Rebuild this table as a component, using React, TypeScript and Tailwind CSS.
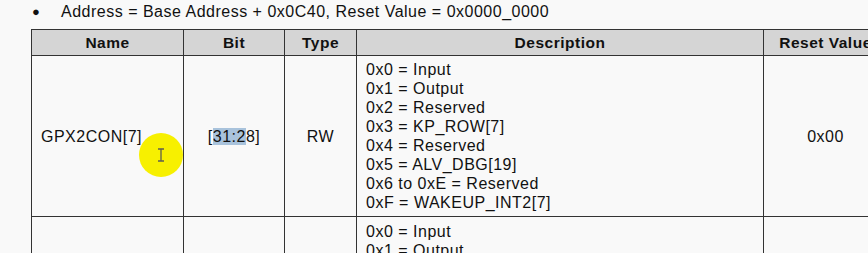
import React from "react";

const DESC = [
  "0x0 = Input",
  "0x1 = Output",
  "0x2 = Reserved",
  "0x3 = KP_ROW[7]",
  "0x4 = Reserved",
  "0x5 = ALV_DBG[19]",
  "0x6 to 0xE = Reserved",
  "0xF = WAKEUP_INT2[7]",
];

const font = { fontFamily: '"Liberation Sans", Arial, sans-serif' };

export default function App() {
  return (
    <div
      className="relative h-[253px] w-[868px] overflow-hidden bg-[#f9f9f9] text-[#111] tracking-[0.5px]"
      style={font}
    >
      <div className="flex h-[23px] items-center pl-[32px] text-[16px]">
        <span className="w-[29px] text-[13px]">●</span>
        <span>Address = Base Address + 0x0C40, Reset Value = 0x0000_0000</span>
      </div>

      <table className="ml-[31px] mt-[6px] w-[856px] table-fixed border-collapse text-[16px] leading-[19px]">
        <colgroup>
          <col className="w-[152px]" />
          <col className="w-[101px]" />
          <col className="w-[72px]" />
          <col className="w-[407px]" />
          <col className="w-[124px]" />
        </colgroup>
        <thead>
          <tr className="h-[26px] bg-[#d5d5d5] text-[15.5px] font-bold">
            <th className="border border-[#333]">Name</th>
            <th className="border border-[#333]">Bit</th>
            <th className="border border-[#333]">Type</th>
            <th className="border border-[#333]">Description</th>
            <th className="border border-[#333]">Reset Value</th>
          </tr>
        </thead>
        <tbody>
          <tr className="h-[161px]">
            <td className="border border-[#333] pl-[9px]">GPX2CON[7]</td>
            <td className="border border-[#333] text-center">
              [<span className="bg-[#a9c3dc]">31:2</span>8]
            </td>
            <td className="border border-[#333] text-center">RW</td>
            <td className="border border-[#333] px-[9px] py-[4px] align-top">
              {DESC.map((d) => (
                <div key={d}>{d}</div>
              ))}
            </td>
            <td className="border border-[#333] text-center">0x00</td>
          </tr>
          <tr className="h-[40px]">
            <td className="border border-[#333]" />
            <td className="border border-[#333]" />
            <td className="border border-[#333]" />
            <td className="border border-[#333] px-[9px] py-[5px] align-top">
              <div>0x0 = Input</div>
              <div>0x1 = Output</div>
            </td>
            <td className="border border-[#333]" />
          </tr>
        </tbody>
      </table>

      {/* cursor highlight */}
      <div className="absolute left-[139px] top-[133px] flex h-[44px] w-[44px] items-center justify-center rounded-full bg-[#f7f000]">
        <svg width="8" height="14" viewBox="0 0 8 14" fill="none" stroke="#5f5f50" strokeWidth="1.3">
          <path d="M1 1h6M1 13h6M4 1v12" />
        </svg>
      </div>
    </div>
  );
}
